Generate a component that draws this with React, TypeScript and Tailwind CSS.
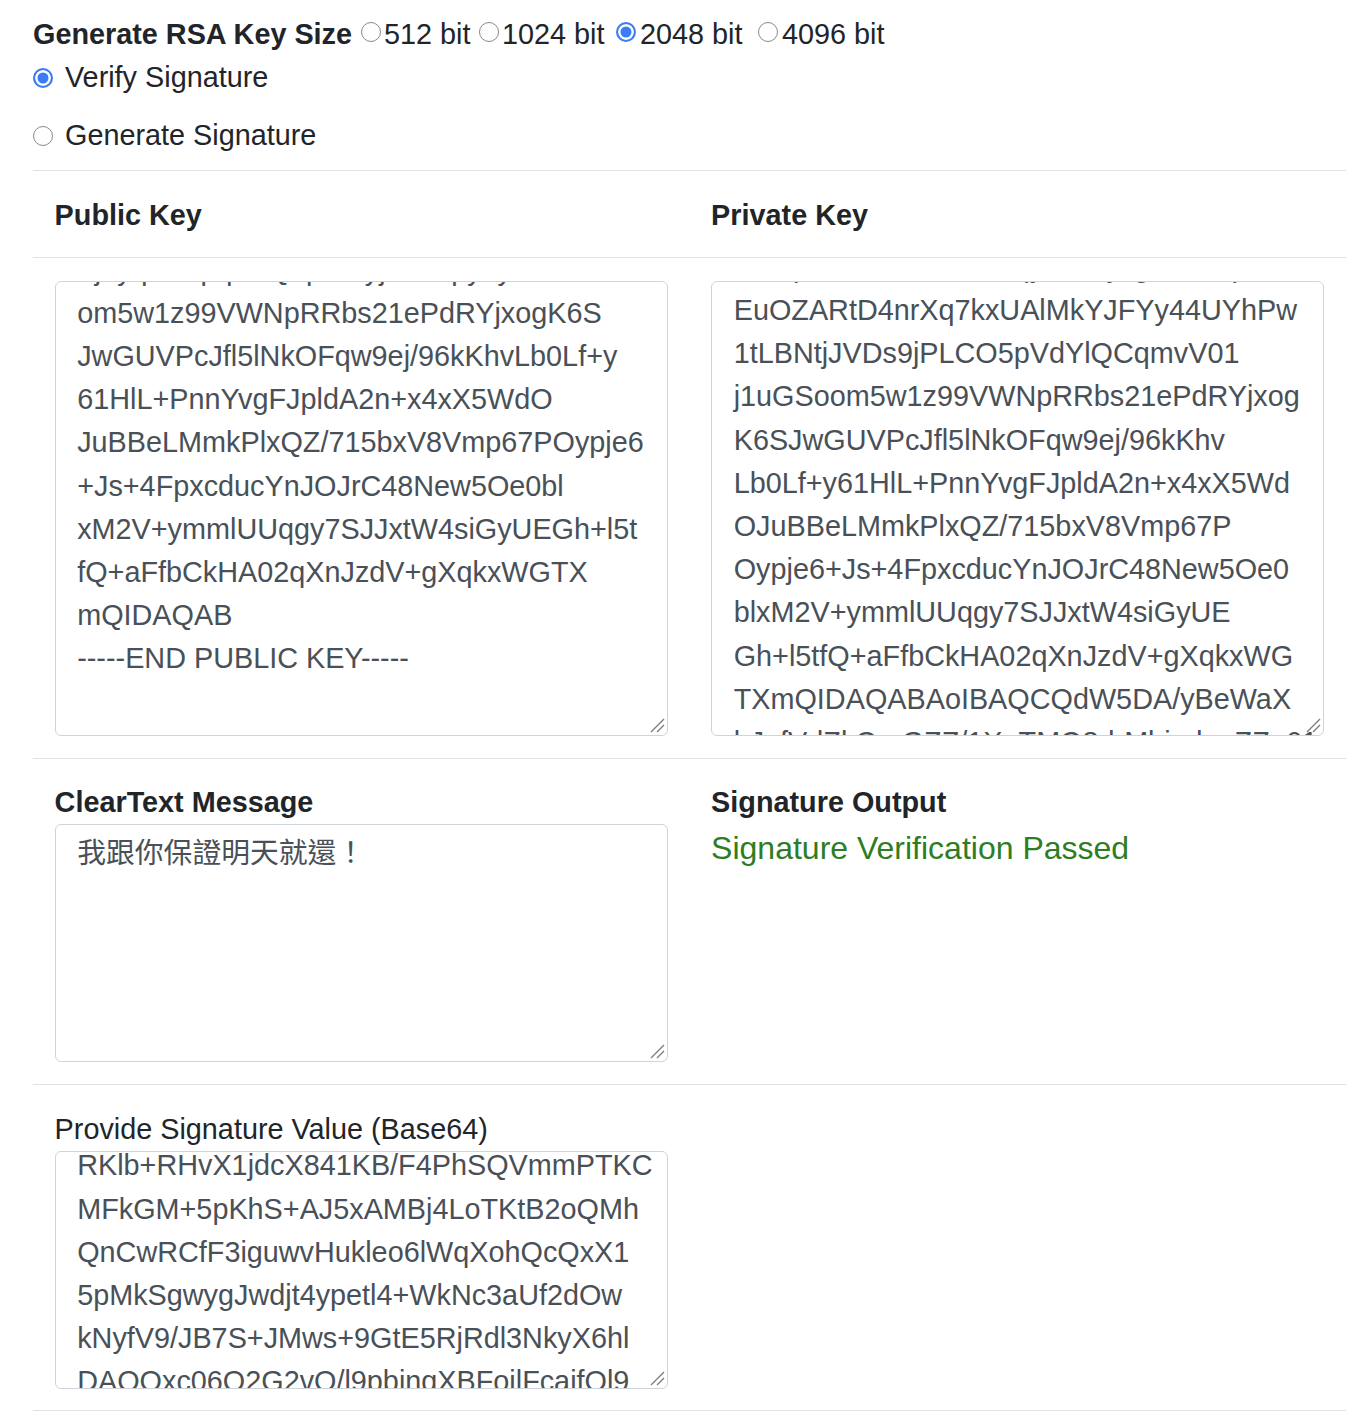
import React, { useEffect, useRef } from "react";

const PUBLIC_KEY = [
  "-----BEGIN PUBLIC KEY-----",
  "MIIBIjANBgkqhkiG9w0BAQEFAAOCAQ8A",
  "MIIBCgKCAQEAqEuOZARtD4nrXq7kxUAl",
  "MkYJFYy44UYhPw1tLBNtjJVDs9jPLCO5",
  "pVdYlQCqmvV01j1uGSo",
  "Zj7yqUe0pqV6Q6pmAyjkw8cpy2yc8",
  "om5w1z99VWNpRRbs21ePdRYjxogK6S",
  "JwGUVPcJfl5lNkOFqw9ej/96kKhvLb0Lf+y",
  "61HlL+PnnYvgFJpldA2n+x4xX5WdO",
  "JuBBeLMmkPlxQZ/715bxV8Vmp67POypje6",
  "+Js+4FpxcducYnJOJrC48New5Oe0bl",
  "xM2V+ymmlUUqgy7SJJxtW4siGyUEGh+l5t",
  "fQ+aFfbCkHA02qXnJzdV+gXqkxWGTX",
  "mQIDAQAB",
  "-----END PUBLIC KEY-----",
  "",
  "",
  "",
].join("\n");

const PRIVATE_KEY = [
  "-----BEGIN RSA PRIVATE KEY-----",
  "MIIEpAIBAAKCAQEAqy1T4zjVgW0Q9p",
  "EuOZARtD4nrXq7kxUAlMkYJFYy44UYhPw",
  "1tLBNtjJVDs9jPLCO5pVdYlQCqmvV01",
  "j1uGSoom5w1z99VWNpRRbs21ePdRYjxog",
  "K6SJwGUVPcJfl5lNkOFqw9ej/96kKhv",
  "Lb0Lf+y61HlL+PnnYvgFJpldA2n+x4xX5Wd",
  "OJuBBeLMmkPlxQZ/715bxV8Vmp67P",
  "Oypje6+Js+4FpxcducYnJOJrC48New5Oe0",
  "blxM2V+ymmlUUqgy7SJJxtW4siGyUE",
  "Gh+l5tfQ+aFfbCkHA02qXnJzdV+gXqkxWG",
  "TXmQIDAQABAoIBAQCQdW5DA/yBeWaX",
  "bJnfVdZkQmGZZ/1XqTMQ8drMbigdquZZg61",
  "Wq8rT1kJmN3yHcQv0PzL7aB5sXeF2uGd",
  "Kf9hR4tYpV6nM2wQjZ8cA1xE3oLbS7iU",
  "-----END RSA PRIVATE KEY-----",
].join("\n");

const SIGNATURE = [
  "RKlb+RHvX1jdcX841KB/F4PhSQVmmPTKC",
  "MFkGM+5pKhS+AJ5xAMBj4LoTKtB2oQMh",
  "QnCwRCfF3iguwvHukleo6lWqXohQcQxX1",
  "5pMkSgwygJwdjt4ypetl4+WkNc3aUf2dOw",
  "kNyfV9/JB7S+JMws+9GtE5RjRdl3NkyX6hl",
  "DAQOxc06Q2G2vO/l9pbinqXBFoilFcaifOl9",
  "Vt3mQ8pLx0aZrN4kYbJ2sW7cE1dHgU5fT",
  "oP6iR9nBqA3vXyK0lMz8CwJ2eS4hG==",
].join("\n");

function Grip() {
  return (
    <svg
      className="absolute right-[3px] bottom-[3px] pointer-events-none"
      width="15"
      height="15"
      viewBox="0 0 15 15"
    >
      <line x1="1" y1="14" x2="14" y2="1" stroke="#7a7a7a" strokeWidth="1.2" />
      <line x1="7" y1="14" x2="14" y2="7" stroke="#7a7a7a" strokeWidth="1.2" />
    </svg>
  );
}

function Area({
  value,
  scroll,
  heightClass,
}: {
  value: string;
  scroll: number;
  heightClass: string;
}) {
  const ref = useRef<HTMLTextAreaElement>(null);
  useEffect(() => {
    if (ref.current) ref.current.scrollTop = scroll;
  }, [scroll]);
  return (
    <div className="relative">
      <textarea
        ref={ref}
        readOnly
        wrap="off"
        value={value}
        className={`block w-full ${heightClass} rounded-[6px] border border-[#ced4da] bg-white px-[21.6px] py-[6.75px] text-[#495057] leading-[1.5] overflow-hidden whitespace-pre resize-none outline-none`}
      />
      <Grip />
    </div>
  );
}

const radioCls =
  "appearance-none inline-block w-[20px] h-[20px] rounded-full border-[1.5px] border-[#8a8a8a] bg-white checked:border-[2px] checked:border-[#3a7cf6] checked:bg-[#3a7cf6] checked:shadow-[inset_0_0_0_2.5px_white]";

export default function App() {
  const line = 43.2;
  return (
    <div className="bg-white min-h-[1418px] pl-[33px] pt-[13px] font-['Liberation_Sans','Noto_Sans_CJK_TC',sans-serif] text-[28.8px] leading-[1.5] text-[#212529]">
      <div className="whitespace-nowrap">
        <span className="font-bold">Generate RSA Key Size</span>
        <input type="radio" name="size" className={`${radioCls} ml-[8.5px] mr-[3.5px] mb-[2px] align-baseline`} />
        <span className="inline-block w-[86px]">512 bit</span>
        <input type="radio" name="size" className={`${radioCls} ml-[9px] mr-[3px] mb-[2px] align-baseline`} />
        <span className="inline-block w-[105px]">1024 bit</span>
        <input type="radio" name="size" defaultChecked className={`${radioCls} ml-[9px] mr-[4px] mb-[2px] align-baseline`} />
        <span className="inline-block w-[109px]">2048 bit</span>
        <input type="radio" name="size" className={`${radioCls} ml-[9px] mr-[4px] mb-[2px] align-baseline`} />
        <span className="inline-block w-[110px]">4096 bit</span>
      </div>
      <label className="flex items-center gap-[12px]">
        <input type="radio" name="mode" defaultChecked className={`${radioCls} shrink-0`} />
        <span>Verify Signature</span>
      </label>
      <label className="mt-[15px] flex items-center gap-[12px]">
        <input type="radio" name="mode" className={`${radioCls} shrink-0`} />
        <span>Generate Signature</span>
      </label>

      <div className="mt-[12px] border-t border-[#dee2e6]">
        <div className="grid grid-cols-2 border-b border-[#dee2e6]">
          <div className="px-[21.6px] pt-[23px] pb-[20.2px] font-bold">Public Key</div>
          <div className="px-[21.6px] pt-[23px] pb-[20.2px] font-bold">Private Key</div>
        </div>
        <div className="grid grid-cols-2 border-b border-[#dee2e6]">
          <div className="px-[21.6px] pt-[23px] pb-[21.6px]">
            <Area value={PUBLIC_KEY} scroll={6 * line - 3.65} heightClass="h-[455px]" />
          </div>
          <div className="px-[21.6px] pt-[23px] pb-[21.6px]">
            <Area value={PRIVATE_KEY} scroll={2 * line - 0.65} heightClass="h-[455px]" />
          </div>
        </div>
        <div className="grid grid-cols-2 border-b border-[#dee2e6]">
          <div className="px-[21.6px] pt-[22.6px] pb-[21.6px]">
            <div className="font-bold">ClearText Message</div>
            <Area value={"我跟你保證明天就還！"} scroll={0} heightClass="h-[238px]" />
          </div>
          <div className="px-[21.6px] pt-[22.6px] pb-[21.6px]">
            <div className="font-bold">Signature Output</div>
            <div className="text-[32px] leading-[1.5] text-[#2e7d22]">Signature Verification Passed</div>
          </div>
        </div>
        <div className="grid grid-cols-2 border-b border-[#dee2e6]">
          <div className="px-[21.6px] pt-[22.6px] pb-[21.6px]">
            <div>Provide Signature Value (Base64)</div>
            <Area value={SIGNATURE} scroll={14.35} heightClass="h-[238px]" />
          </div>
          <div className="px-[21.6px] pt-[22.6px] pb-[21.6px]"></div>
        </div>
      </div>
    </div>
  );
}
